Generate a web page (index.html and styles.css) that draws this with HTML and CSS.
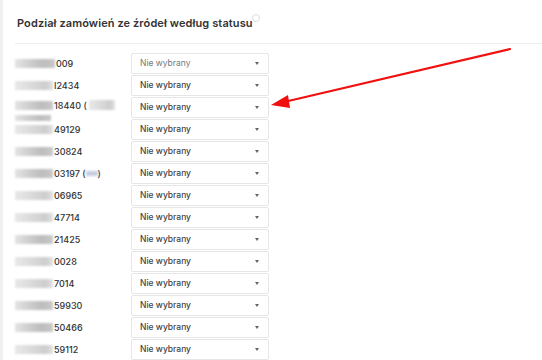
FILE: index.html
```html
<!DOCTYPE html>
<html lang="pl">
<head>
  <meta charset="UTF-8">
  <title>Podział zamówień</title>
  <link rel="stylesheet" href="styles.css">
</head>
<body>
  <div class="panel">
    <h2 class="title">Podział zamówień ze źródeł według statusu <span class="info"></span></h2>
    <div class="rows">
      <div class="row"><div class="label"><span class="blur w40"></span><span class="num">009</span></div><div class="select first">Nie wybrany<span class="caret"></span></div></div>
      <div class="row"><div class="label"><span class="blur w38 light"></span><span class="num">I2434</span></div><div class="select">Nie wybrany<span class="caret"></span></div></div>
      <div class="row tall"><div class="label wrap"><span class="blur w38"></span><span class="num">18440 (</span><span class="blur w32 light"></span><span class="blur w38 second"></span></div><div class="select">Nie wybrany<span class="caret"></span></div></div>
      <div class="row"><div class="label"><span class="blur w38 light"></span><span class="num">49129</span></div><div class="select">Nie wybrany<span class="caret"></span></div></div>
      <div class="row"><div class="label"><span class="blur w38"></span><span class="num">30824</span></div><div class="select">Nie wybrany<span class="caret"></span></div></div>
      <div class="row"><div class="label"><span class="blur w38"></span><span class="num">03197 (<span class="blur tiny"></span>)</span></div><div class="select">Nie wybrany<span class="caret"></span></div></div>
      <div class="row"><div class="label"><span class="blur w38 light"></span><span class="num">06965</span></div><div class="select">Nie wybrany<span class="caret"></span></div></div>
      <div class="row"><div class="label"><span class="blur w38 light"></span><span class="num">47714</span></div><div class="select">Nie wybrany<span class="caret"></span></div></div>
      <div class="row"><div class="label"><span class="blur w38"></span><span class="num">21425</span></div><div class="select">Nie wybrany<span class="caret"></span></div></div>
      <div class="row"><div class="label"><span class="blur w38 light"></span><span class="num">0028</span></div><div class="select">Nie wybrany<span class="caret"></span></div></div>
      <div class="row"><div class="label"><span class="blur w38 light"></span><span class="num">7014</span></div><div class="select">Nie wybrany<span class="caret"></span></div></div>
      <div class="row"><div class="label"><span class="blur w38"></span><span class="num">59930</span></div><div class="select">Nie wybrany<span class="caret"></span></div></div>
      <div class="row"><div class="label"><span class="blur w38"></span><span class="num">50466</span></div><div class="select">Nie wybrany<span class="caret"></span></div></div>
      <div class="row"><div class="label"><span class="blur w38 light"></span><span class="num">59112</span></div><div class="select">Nie wybrany<span class="caret"></span></div></div>
    </div>
    <svg class="arrow" width="542" height="360" viewBox="0 0 542 360">
      <line x1="510" y1="49" x2="284" y2="102" stroke="#f01010" stroke-width="2.2" stroke-linecap="round"/>
      <polygon points="271,105 288,95 290,108" fill="#f01010"/>
    </svg>
  </div>
</body>
</html>
```

FILE: styles.css
```css
body {
  margin: 0;
  background-color: #eef0f2;
  font-family: Inter, "Open Sans", sans-serif;
}
.panel {
  position: relative;
  margin-left: 3px;
  height: 360px;
  background: white;
  overflow: hidden;
}
.title {
  margin: 0 0 0 12px;
  padding: 14px 0 13px 2px;
  font-size: 11px;
  font-weight: 600;
  color: #333;
  border-bottom: 1px solid #eeeeee;
  letter-spacing: 0.1px;
}
.info {
  display: inline-block;
  width: 6px;
  height: 6px;
  border: 1px solid #ddd;
  border-radius: 50%;
  vertical-align: 5px;
  margin-left: -3px;
}
.rows {
  padding: 8px 0 0 12px;
}
.row {
  display: flex;
  align-items: center;
  height: 22px;
}
.label {
  width: 116px;
  display: flex;
  align-items: center;
  font-size: 9px;
  color: #333;
}
.label.wrap {
  flex-wrap: wrap;
  row-gap: 4px;
  margin-top: 6px;
}
.blur {
  display: inline-block;
  height: 9px;
  background: linear-gradient(90deg, #e4e4e4 0%, #cfcfcf 35%, #bdbdbd 70%, #c9c9c9 100%);
  filter: blur(1px);
}
.blur.light {
  background: linear-gradient(90deg, #e8e8e8 0%, #dcdcdc 40%, #cdcdcd 80%, #e2e2e2 100%);
}
.w40 { width: 40px; }
.w38 { width: 38px; }
.w32 { width: 26px; height: 10px; margin-left: 2px; }
.blur.second { height: 6px; width: 36px; }
.blur.tiny { width: 12px; height: 5px; vertical-align: 1px; background: #c5cde0; }
.num {
  font-weight: 500;
  margin-left: 1px;
}
.select {
  position: relative;
  width: 128px;
  height: 19px;
  padding-left: 8px;
  border: 1px solid #e6e6e6;
  border-radius: 2px;
  font-size: 8.5px;
  font-weight: 500;
  color: #444;
  line-height: 19px;
}
.select.first {
  color: #777;
  font-weight: 400;
}
.caret {
  position: absolute;
  right: 9px;
  top: 8px;
  border-left: 2.5px solid transparent;
  border-right: 2.5px solid transparent;
  border-top: 3px solid #666;
}
.arrow {
  position: absolute;
  left: -3px;
  top: 0;
}
```
